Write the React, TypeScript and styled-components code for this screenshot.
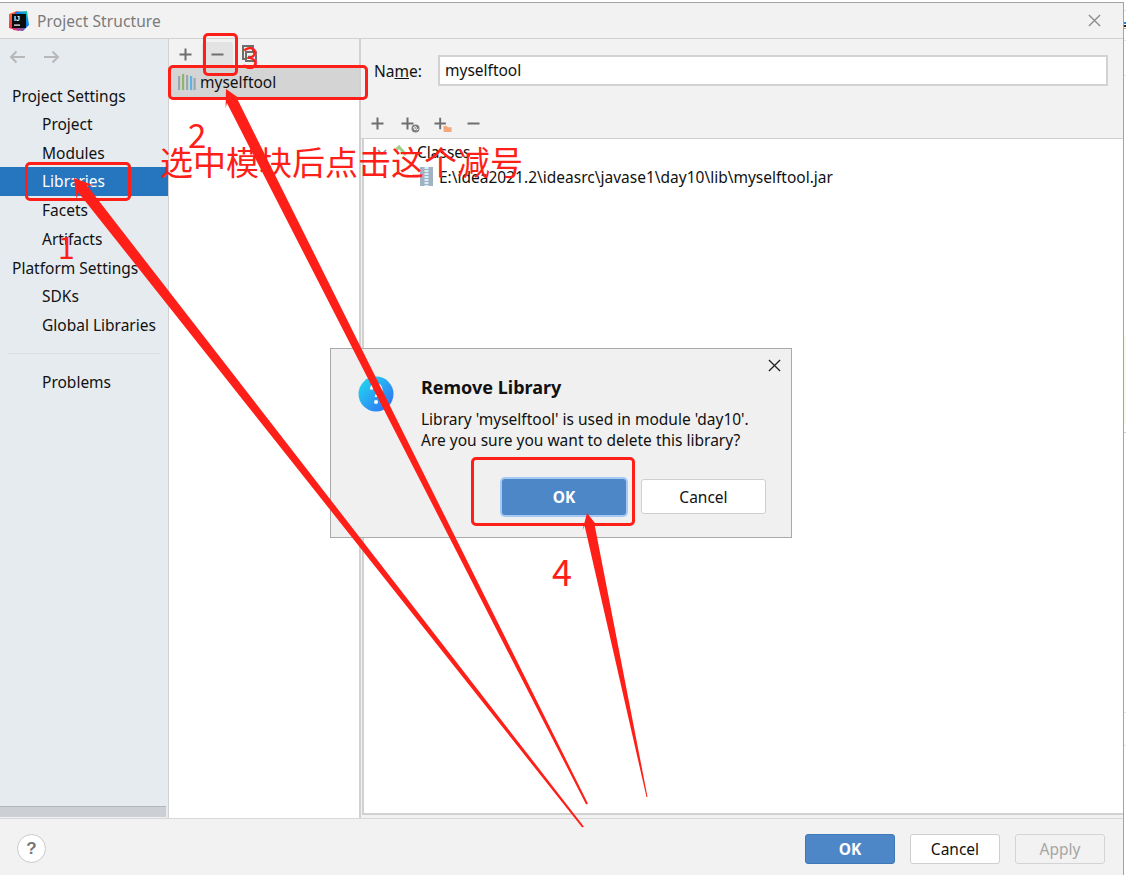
import styled, { createGlobalStyle } from "styled-components";

const RED = "#fe2018";
const UI_FONT = `"Noto Sans", "Open Sans", Arial, sans-serif`;

const GlobalStyle = createGlobalStyle`
  html, body {
    margin: 0;
    padding: 0;
    background: #ffffff;
  }
  body {
    font-family: ${UI_FONT};
    font-size: 15.5px;
    color: #111111;
  }
  * {
    box-sizing: border-box;
  }
`;

type Pt = [number, number];

// tapered arrow, narrow at the tail and wide behind the head
function arrowPoints(tip: Pt, tail: Pt, headLen: number, headW: number, neckW: number, tailW: number) {
  const dx = tail[0] - tip[0];
  const dy = tail[1] - tip[1];
  const len = Math.hypot(dx, dy);
  const ux = dx / len;
  const uy = dy / len;
  const nx = uy;
  const ny = -ux;
  const at = (t: number, s: number): string =>
    `${(tip[0] + ux * t + nx * s).toFixed(1)},${(tip[1] + uy * t + ny * s).toFixed(1)}`;
  return [
    at(0, 0),
    at(headLen, headW),
    at(headLen - 4, neckW),
    at(len, tailW),
    at(len, -tailW),
    at(headLen - 4, -neckW),
    at(headLen, -headW),
  ].join(" ");
}

const Page = styled.div`
  position: relative;
  width: 1126px;
  height: 875px;
  padding-top: 2px;
  padding-right: 2px;
  overflow: hidden;
  background: #ffffff;
`;

const Frame = styled.div`
  display: flex;
  flex-direction: column;
  height: 873px;
  border-top: 1px solid #a3a3a3;
  border-right: 1px solid #a3a3a3;
  background: #f2f2f2;
`;

// bits of the window behind that show past the right edge
const EdgeMark = styled.div<{ $y: number; $h?: number; $color: string }>`
  position: absolute;
  right: 0;
  top: ${(p) => p.$y}px;
  width: 2px;
  height: ${(p) => p.$h ?? 1}px;
  background: ${(p) => p.$color};
`;

const TitleBar = styled.header`
  display: flex;
  align-items: center;
  flex: 0 0 36px;
  padding: 0 22px 0 9px;
  gap: 8px;
  border-bottom: 1px solid #d1d1d1;
`;

const WindowTitle = styled.div`
  flex: 1;
  color: #7a7a7a;
  letter-spacing: 0.1px;
`;

const Body = styled.div`
  display: flex;
  flex: 1;
  min-height: 0;
`;

const Sidebar = styled.nav`
  display: flex;
  flex-direction: column;
  flex: 0 0 169px;
  border-right: 1px solid #d1d1d1;
  background: #e6ebf0;
`;

const NavArrows = styled.div`
  display: flex;
  align-items: center;
  gap: 17px;
  height: 42px;
  padding: 0 0 6px 9px;
`;

const NavRow = styled.div<{ $selected?: boolean; $heading?: boolean }>`
  display: flex;
  align-items: center;
  flex: 0 0 28.7px;
  padding-top: ${(p) => (p.$heading ? "2px" : "0")};
  padding-left: ${(p) => (p.$heading ? "12px" : "42px")};
  background: ${(p) => (p.$selected ? "#2675bf" : "transparent")};
  color: ${(p) => (p.$selected ? "#ffffff" : "#111111")};
`;

const NavDivider = styled.div`
  height: 1px;
  margin: 14px 8px 13px 8px;
  background: #dcdfe3;
`;

const SideScroll = styled.div`
  margin-top: auto;
  height: 12px;
  margin-right: 2px;
  border-top: 1px solid #b3b7bb;
  border-bottom: 1px solid #eef0f2;
  background: #ccd0d5;
`;

const LibraryColumn = styled.section`
  display: flex;
  flex-direction: column;
  flex: 0 0 192px;
  border-right: 2px solid #d1d1d1;
  background: #ffffff;
`;

const LibraryTools = styled.div`
  display: flex;
  align-items: center;
  flex: 0 0 28px;
  padding-top: 3px;
  background: #f2f2f2;
`;

const ToolButton = styled.div<{ $hover?: boolean; $w: number }>`
  display: flex;
  align-items: center;
  justify-content: center;
  width: ${(p) => p.$w}px;
  height: 25px;
  border-radius: 3px;
  background: ${(p) => (p.$hover ? "#e3e3e3" : "transparent")};
`;

const LibraryRow = styled.div`
  display: flex;
  align-items: center;
  flex: 0 0 31px;
  gap: 4px;
  padding: 0 0 1px 9px;
  background: #d4d4d4;
`;

const Detail = styled.section`
  display: flex;
  flex-direction: column;
  flex: 1;
  min-width: 0;
`;

const NameRow = styled.div`
  display: flex;
  align-items: center;
  flex: 0 0 63px;
  padding: 0 15px 0 13px;
`;

const NameLabel = styled.label`
  flex: 0 0 64px;
`;

const NameInput = styled.div`
  flex: 1;
  height: 31px;
  padding-left: 5px;
  border: 2px solid #d2d2d2;
  background: #ffffff;
  line-height: 26px;
`;

const TreeTools = styled.div`
  display: flex;
  align-items: center;
  gap: 13.5px;
  flex: 0 0 37px;
  padding: 7px 0 0 10px;
  border-bottom: 1px solid #d1d1d1;
`;

const ToolIcon = styled.span<{ $w: number }>`
  display: inline-flex;
  align-items: center;
  width: ${(p) => p.$w}px;
  height: 20px;
`;

const Tree = styled.div`
  flex: 1;
  margin-left: 1px;
  border-left: 2px solid #d1d1d1;
  border-bottom: 2px solid #d1d1d1;
  background: #ffffff;
`;

const TreeRow = styled.div<{ $indent: number; $gap: number }>`
  display: flex;
  align-items: center;
  height: 25px;
  gap: ${(p) => p.$gap}px;
  padding-left: ${(p) => p.$indent}px;
`;

const TreeGap = styled.div`
  height: 3px;
  background: #f2f2f2;
`;

const Footer = styled.footer`
  display: flex;
  align-items: center;
  flex: 0 0 57px;
  padding: 3px 18px 0 17px;
  border-top: 1px solid #d8d8d8;
`;

const HelpButton = styled.div`
  display: flex;
  align-items: center;
  justify-content: center;
  width: 29px;
  height: 29px;
  margin-right: auto;
  border: 1px solid #c9c9c9;
  border-radius: 50%;
  background: #ffffff;
  color: #777777;
  font-family: "Liberation Sans", Arial, sans-serif;
  font-size: 17px;
  font-weight: 700;
`;

const Button = styled.div<{ $variant?: "primary" | "disabled" }>`
  display: flex;
  align-items: center;
  justify-content: center;
  width: 90px;
  height: 30px;
  margin-left: 15px;
  border-radius: 3px;
  border: 1px solid
    ${(p) =>
      p.$variant === "primary"
        ? "#3f78b8"
        : p.$variant === "disabled"
          ? "#d4d4d4"
          : "#cfcfcf"};
  background: ${(p) =>
    p.$variant === "primary"
      ? "#4d87c7"
      : p.$variant === "disabled"
        ? "#f2f2f2"
        : "#ffffff"};
  color: ${(p) =>
    p.$variant === "primary"
      ? "#ffffff"
      : p.$variant === "disabled"
        ? "#a5a5a5"
        : "#111111"};
  font-weight: ${(p) => (p.$variant === "primary" ? 700 : 400)};
`;

const Dialog = styled.div`
  position: absolute;
  left: 330px;
  top: 348px;
  display: flex;
  width: 462px;
  height: 190px;
  border: 1px solid #a9a9a9;
  background: #f0f0f0;
`;

const DialogIcon = styled.div`
  flex: 0 0 90px;
  padding: 27px 0 0 27px;
`;

const DialogBody = styled.div`
  display: flex;
  flex-direction: column;
  flex: 1;
  padding-top: 25px;
`;

const DialogTitle = styled.div`
  height: 35px;
  font-size: 18px;
  font-weight: 700;
  line-height: 26px;
`;

const DialogText = styled.div`
  height: 21px;
  line-height: 21px;
`;

const DialogClose = styled.div`
  position: absolute;
  right: 9px;
  top: 10px;
  width: 14px;
  height: 14px;
  line-height: 0;
`;

const DialogButtons = styled.div`
  display: flex;
  gap: 15px;
  margin-top: 26px;
`;

const DialogOk = styled.div`
  display: flex;
  align-items: center;
  justify-content: center;
  width: 124px;
  height: 36px;
  border-radius: 3px;
  margin: 2px 0 0 81px;
  background: #4d87c7;
  box-shadow: 0 0 0 2px #a5c9f2;
  color: #ffffff;
  font-weight: 700;
`;

const DialogCancel = styled.div`
  display: flex;
  align-items: center;
  justify-content: center;
  width: 125px;
  height: 35px;
  margin-top: 2px;
  border: 1px solid #cfcfcf;
  border-radius: 3px;
  background: #ffffff;
`;

const Callout = styled.div<{ $x: number; $y: number; $w: number; $h: number }>`
  position: absolute;
  left: ${(p) => p.$x}px;
  top: ${(p) => p.$y}px;
  width: ${(p) => p.$w}px;
  height: ${(p) => p.$h}px;
  border: 3px solid ${RED};
  border-radius: 5px;
`;

const Note = styled.div<{ $x: number; $y: number; $size: number }>`
  position: absolute;
  left: ${(p) => p.$x}px;
  top: ${(p) => p.$y}px;
  color: ${RED};
  font-family: "Noto Sans CJK SC", "Noto Sans", sans-serif;
  font-size: ${(p) => p.$size}px;
  line-height: 1;
  white-space: nowrap;
`;

const ArrowLayer = styled.svg`
  position: absolute;
  left: 0;
  top: 0;
  pointer-events: none;
`;

function PlusIcon() {
  return (
    <svg width="13" height="13" viewBox="0 0 13 13">
      <path d="M6.5 0.5v12M0.5 6.5h12" stroke="#6e6e6e" strokeWidth="2" fill="none" />
    </svg>
  );
}

function MinusIcon() {
  return (
    <svg width="13" height="13" viewBox="0 0 13 13">
      <path d="M0.5 6.5h12" stroke="#6e6e6e" strokeWidth="2" fill="none" />
    </svg>
  );
}

function PlusGlobeIcon() {
  return (
    <svg width="20" height="20" viewBox="0 0 20 20">
      <path d="M6.5 3.5v12M0.5 9.5h12" stroke="#6e6e6e" strokeWidth="2" fill="none" />
      <circle cx="14.5" cy="14.5" r="4" fill="#7d7d7d" />
      <path d="M12.5 13.5l2-1 1 1.5-1.5 2zM15.5 16l2-1" stroke="#ffffff" strokeWidth="1" fill="none" />
    </svg>
  );
}

function PlusFolderIcon() {
  return (
    <svg width="20" height="20" viewBox="0 0 20 20">
      <path d="M6.5 3.5v12M0.5 9.5h12" stroke="#6e6e6e" strokeWidth="2" fill="none" />
      <path d="M10 12h3.5l1 1.5h4v5H10z" fill="#f3a77a" />
    </svg>
  );
}

function ExtractIcon() {
  return (
    <svg width="16" height="20" viewBox="0 0 16 20">
      <rect x="1" y="1" width="10" height="13" fill="none" stroke="#6e6e6e" strokeWidth="2" />
      <rect x="4" y="7" width="10" height="9" fill="#f2f2f2" stroke="#6e6e6e" strokeWidth="2" />
      <path d="M6 11.5h6" stroke="#6e6e6e" strokeWidth="1.5" />
    </svg>
  );
}

function BackIcon({ flip }: { flip?: boolean }) {
  return (
    <svg width="17" height="14" viewBox="0 0 17 14" style={flip ? { transform: "scaleX(-1)" } : undefined}>
      <path d="M16 7H2M7.5 1.5L2 7l5.5 5.5" stroke="#b8b8b8" strokeWidth="2" fill="none" />
    </svg>
  );
}

function IdeaLogo() {
  return (
    <svg width="20" height="20" viewBox="0 0 20 20">
      <defs>
        <linearGradient id="logoA" x1="0" y1="0" x2="1" y2="1">
          <stop offset="0" stopColor="#fc801d" />
          <stop offset="0.5" stopColor="#fe2857" />
          <stop offset="1" stopColor="#b74af7" />
        </linearGradient>
        <linearGradient id="logoB" x1="0" y1="1" x2="1" y2="0">
          <stop offset="0" stopColor="#fe2857" />
          <stop offset="0.6" stopColor="#087cfa" />
          <stop offset="1" stopColor="#21d789" />
        </linearGradient>
      </defs>
      <path d="M0 3l8-3 8 2-6 18-10-3z" fill="url(#logoA)" />
      <path d="M6 1l12-1 2 14-6 6-10-1z" fill="url(#logoB)" />
      <rect x="3" y="3" width="14" height="14" fill="#0b0b0b" />
      <text x="5" y="10" fill="#ffffff" fontFamily="Liberation Sans, sans-serif" fontSize="7" fontWeight="700">
        IJ
      </text>
      <rect x="5" y="13.5" width="6" height="1.2" fill="#ffffff" />
    </svg>
  );
}

function LibraryIcon() {
  const bars: [number, string, number][] = [
    [0, "#9aa7b0", 14],
    [4, "#8fb56a", 16],
    [8, "#9aa7b0", 15],
    [12, "#5ab4dd", 14],
    [15.5, "#9aa7b0", 12],
  ];
  return (
    <svg width="18" height="16" viewBox="0 0 18 16">
      {bars.map(([x, color, h]) => (
        <rect key={x} x={x} y={16 - h} width="2.2" height={h} fill={color} />
      ))}
    </svg>
  );
}

function ClassesIcon() {
  return (
    <svg width="18" height="14" viewBox="0 0 18 14">
      <path d="M3 5l3-3 7 8" stroke="#9fcf8c" strokeWidth="3" fill="none" />
    </svg>
  );
}

function ChevronIcon() {
  return (
    <svg width="10" height="8" viewBox="0 0 10 8">
      <path d="M1 2l4 4 4-4" stroke="#8c8c8c" strokeWidth="1.5" fill="none" />
    </svg>
  );
}

function JarIcon() {
  return (
    <svg width="13" height="19" viewBox="0 0 13 19">
      <rect width="13" height="19" fill="#9fb3c2" />
      <path d="M6.5 0v19" stroke="#d8eef8" strokeWidth="4" strokeDasharray="2 1" />
    </svg>
  );
}

function QuestionIcon() {
  return (
    <svg width="36" height="36" viewBox="0 0 36 36">
      <defs>
        <linearGradient id="askFill" x1="0" y1="0" x2="1" y2="1">
          <stop offset="0" stopColor="#1fe0f0" />
          <stop offset="1" stopColor="#3368f5" />
        </linearGradient>
      </defs>
      <circle cx="18" cy="18" r="17.5" fill="url(#askFill)" />
      <path d="M13.5 13.5a4.7 4.7 0 1 1 7 4c-1.6 1-2.4 1.8-2.4 3.5" stroke="#ffffff" strokeWidth="3" fill="none" />
      <circle cx="18" cy="26" r="2" fill="#ffffff" />
    </svg>
  );
}

function CloseIcon({ color, size }: { color: string; size: number }) {
  return (
    <svg width={size} height={size} viewBox="0 0 14 14">
      <path d="M1 1l12 12M13 1L1 13" stroke={color} strokeWidth="1.4" fill="none" />
    </svg>
  );
}

const NAV_TOP = ["Project", "Modules", "Libraries", "Facets", "Artifacts"];
const NAV_PLATFORM = ["SDKs", "Global Libraries"];

const ARROWS = [
  arrowPoints([587, 513], [647, 797], 16, 8, 5, 0.5),
  arrowPoints([226, 89], [587, 804], 17, 9, 5.5, 1),
  arrowPoints([74, 178], [583, 827], 18, 11, 5.5, 1),
];

const EDGE_MARKS: [number, number, string][] = [
  [10, 1, "#e4e4e4"],
  [22, 2, "#2b7fd0"],
  [25, 2, "#222222"],
  [28, 1, "#e8a060"],
  [40, 1, "#e4e4e4"],
  [75, 1, "#e4e4e4"],
  [335, 90, "#fdf9ec"],
  [432, 1, "#cfcfcf"],
  [712, 1, "#e4e4e4"],
  [745, 1, "#e4e4e4"],
];

export default function App() {
  return (
    <Page>
      <GlobalStyle />
      {EDGE_MARKS.map(([y, h, color]) => (
        <EdgeMark key={y} $y={y} $h={h} $color={color} />
      ))}
      <Frame>
        <TitleBar>
          <IdeaLogo />
          <WindowTitle>Project Structure</WindowTitle>
          <CloseIcon color="#8a8a8a" size={13} />
        </TitleBar>
        <Body>
          <Sidebar>
            <NavArrows>
              <BackIcon />
              <BackIcon flip />
            </NavArrows>
            <NavRow $heading>Project Settings</NavRow>
            {NAV_TOP.map((name) => (
              <NavRow key={name} $selected={name === "Libraries"}>
                {name}
              </NavRow>
            ))}
            <NavRow $heading>Platform Settings</NavRow>
            {NAV_PLATFORM.map((name) => (
              <NavRow key={name}>{name}</NavRow>
            ))}
            <NavDivider />
            <NavRow>Problems</NavRow>
            <SideScroll />
          </Sidebar>
          <LibraryColumn>
            <LibraryTools>
              <ToolButton $w={33}>
                <PlusIcon />
              </ToolButton>
              <ToolButton $hover $w={31}>
                <MinusIcon />
              </ToolButton>
              <ToolButton $w={33}>
                <ExtractIcon />
              </ToolButton>
            </LibraryTools>
            <LibraryRow>
              <LibraryIcon />
              <span>myselftool</span>
            </LibraryRow>
          </LibraryColumn>
          <Detail>
            <NameRow>
              <NameLabel>
                Na<u>m</u>e:
              </NameLabel>
              <NameInput>myselftool</NameInput>
            </NameRow>
            <TreeTools>
              <ToolIcon $w={16}>
                <PlusIcon />
              </ToolIcon>
              <ToolIcon $w={20}>
                <PlusGlobeIcon />
              </ToolIcon>
              <ToolIcon $w={19}>
                <PlusFolderIcon />
              </ToolIcon>
              <ToolIcon $w={13}>
                <MinusIcon />
              </ToolIcon>
            </TreeTools>
            <Tree>
              <TreeRow $indent={13} $gap={6}>
                <ChevronIcon />
                <ClassesIcon />
                <span>Classes</span>
              </TreeRow>
              <TreeRow $indent={56} $gap={6}>
                <JarIcon />
                <span>E:\idea2021.2\ideasrc\javase1\day10\lib\myselftool.jar</span>
              </TreeRow>
            </Tree>
            <TreeGap />
          </Detail>
        </Body>
        <Footer>
          <HelpButton>?</HelpButton>
          <Button $variant="primary">OK</Button>
          <Button>Cancel</Button>
          <Button $variant="disabled">Apply</Button>
        </Footer>
      </Frame>

      <Dialog>
        <DialogIcon>
          <QuestionIcon />
        </DialogIcon>
        <DialogBody>
          <DialogTitle>Remove Library</DialogTitle>
          <DialogText>Library 'myselftool' is used in module 'day10'.</DialogText>
          <DialogText>Are you sure you want to delete this library?</DialogText>
          <DialogButtons>
            <DialogOk>OK</DialogOk>
            <DialogCancel>Cancel</DialogCancel>
          </DialogButtons>
        </DialogBody>
        <DialogClose>
          <CloseIcon color="#222222" size={13} />
        </DialogClose>
      </Dialog>

      <Callout $x={203} $y={33} $w={35} $h={43} />
      <Callout $x={168} $y={65} $w={200} $h={35} />
      <Callout $x={25} $y={162} $w={106} $h={39} />
      <Callout $x={471} $y={457} $w={164} $h={69} />

      <ArrowLayer width="1126" height="875" viewBox="0 0 1126 875">
        {ARROWS.map((points) => (
          <polygon key={points} points={points} fill={RED} />
        ))}
      </ArrowLayer>

      <Note $x={188} $y={118} $size={33}>2</Note>
      <Note $x={160} $y={145} $size={33}>选中模块后点击这个减号</Note>
      <Note $x={242} $y={41} $size={30}>3</Note>
      <Note $x={58} $y={231} $size={30}>1</Note>
      <Note $x={552} $y={552} $size={36}>4</Note>
    </Page>
  );
}
